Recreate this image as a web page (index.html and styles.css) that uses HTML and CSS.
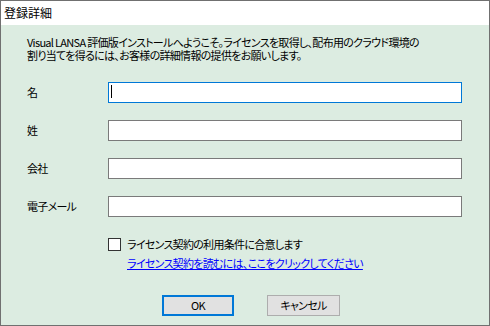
FILE: index.html
```html
<!DOCTYPE html>
<html lang="ja">
<head>
<meta charset="utf-8">
<link rel="stylesheet" href="styles.css">
</head>
<body>
<div class="window">
  <div class="titlebar">登録詳細</div>
  <div class="content">
    <p class="intro">Visual LANSA 評価版インストールへようこそ。ライセンスを取得し、配布用のクラウド環境の<br>割り当てを得るには、お客様の詳細情報の提供をお願いします。</p>
    <div class="form">
      <div class="label">名</div>
      <div class="field focused"><span class="caret"></span></div>
      <div class="label">姓</div>
      <div class="field"></div>
      <div class="label">会社</div>
      <div class="field"></div>
      <div class="label">電子メール</div>
      <div class="field"></div>
    </div>
    <div class="agree">
      <div class="check-row"><span class="checkbox"></span><span>ライセンス契約の利用条件に合意します</span></div>
      <a class="link" href="#">ライセンス契約を読むには、ここをクリックしてください</a>
    </div>
    <div class="buttons">
      <div class="btn default">OK</div>
      <div class="btn">キャンセル</div>
    </div>
  </div>
</div>
</body>
</html>
```

FILE: styles.css
```css
html, body {
  margin: 0;
  padding: 0;
}
body {
  width: 490px;
  height: 326px;
  font-family: "Noto Sans CJK JP", sans-serif;
  font-size: 11px;
  letter-spacing: -0.7px;
  font-feature-settings: "palt";
  color: #000;
}
.window {
  box-sizing: border-box;
  width: 490px;
  height: 326px;
  border: 1px solid #707070;
  display: flex;
  flex-direction: column;
  background: #dcece1;
}
.titlebar {
  height: 24px;
  background: #fff;
  padding-left: 3px;
  display: flex;
  align-items: center;
  font-size: 12px;
  letter-spacing: 0;
  line-height: 14px;
}
.content {
  flex: 1;
  padding: 0 0 0 26px;
  display: flex;
  flex-direction: column;
}
.intro {
  margin: 11px 0 0 0;
  line-height: 13px;
  white-space: nowrap;
}
.form {
  margin-top: 20px;
  display: grid;
  grid-template-columns: 81px 354px;
  row-gap: 17px;
  align-items: center;
}
.label {
  line-height: 13px;
}
.field {
  box-sizing: border-box;
  height: 21px;
  background: #fff;
  border: 1px solid #7a7a7a;
  position: relative;
}
.field.focused {
  border-color: #0078d7;
}
.caret {
  position: absolute;
  left: 2px;
  top: 2px;
  width: 1px;
  height: 13px;
  background: #000;
}
.agree {
  margin: 21px 0 0 81px;
  display: flex;
  flex-direction: column;
  align-items: flex-start;
}
.check-row {
  display: flex;
  align-items: center;
  line-height: 13px;
}
.checkbox {
  box-sizing: border-box;
  width: 13px;
  height: 13px;
  border: 1px solid #333;
  background: #fff;
  margin-right: 6px;
}
.link {
  margin: 6px 0 0 19px;
  color: #0000ff;
  text-decoration: underline;
  line-height: 13px;
}
.buttons {
  margin: 25px 0 0 135px;
  display: flex;
  gap: 33px;
}
.btn {
  box-sizing: border-box;
  width: 73px;
  height: 21px;
  background: #e1e1e1;
  border: 1px solid #adadad;
  display: flex;
  align-items: center;
  justify-content: center;
  line-height: 13px;
}
.btn.default {
  width: 72px;
  border: 2px solid #0078d7;
}
```
